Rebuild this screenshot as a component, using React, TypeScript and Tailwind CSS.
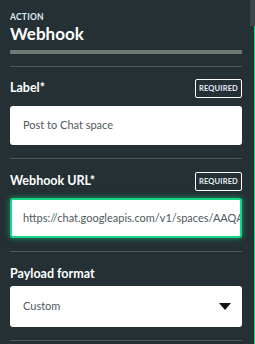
import React from 'react';

function Required() {
  return (
    <span className="flex items-center justify-center h-[19px] w-[47px] rounded-[2px] border border-white text-[7.5px] font-bold tracking-[0.02em] text-[#e6eef5]">
      REQUIRED
    </span>
  );
}

function Divider() {
  return <div className="h-px bg-[#4b5a59]" />;
}

export default function App() {
  return (
    <div className="flex h-[344px] w-[255px] overflow-hidden bg-[#243033]" style={{ fontFamily: 'Lato, "Noto Sans", sans-serif' }}>
      <div className="flex w-[250px] flex-col pl-[10px] pr-[8px]">
        {/* header */}
        <div className="pt-[12px] text-[8.5px] font-bold leading-[10px] tracking-[0.03em] text-[#dfe9f2]">ACTION</div>
        <div className="mt-[2px] text-[17px] font-bold leading-[19px] text-white">Webhook</div>
        <div className="mt-[7px] h-[4px] rounded-[1px] bg-[#6e7978]" />
        <div className="mt-[12px]">
          <Divider />
        </div>

        {/* label */}
        <div className="flex items-center justify-between pt-[12px]">
          <span className="text-[12.5px] font-bold text-white">Label*</span>
          <Required />
        </div>
        <div className="mt-[8px] flex h-[39px] items-center rounded-[3px] bg-white px-[13px] text-[11px] text-[#4f585c]">
          Post to Chat space
        </div>
        <div className="mt-[13px]">
          <Divider />
        </div>

        {/* webhook url */}
        <div className="flex items-center justify-between pt-[13px]">
          <span className="text-[12.5px] font-bold text-white">Webhook URL*</span>
          <Required />
        </div>
        <div className="mt-[7px] flex h-[40px] items-center overflow-hidden whitespace-nowrap rounded-[3px] border-2 border-[#12d98a] bg-white px-[11px] text-[11px] text-[#4f585c] shadow-[0_0_5px_1px_rgba(18,217,138,0.45)]">
          https://chat.googleapis.com/v1/spaces/AAQA
        </div>
        <div className="mt-[13px]">
          <Divider />
        </div>

        {/* payload */}
        <div className="pt-[13px] text-[12.5px] font-bold leading-[17px] text-white">Payload format</div>
        <div className="mt-[4px] flex h-[41px] items-center justify-between rounded-[3px] bg-white pl-[13px] pr-[11px] text-[11px] text-[#4f585c]">
          <span>Custom</span>
          <svg width="12" height="7" viewBox="0 0 12 7"><path d="M0 0h12L6 7z" fill="#111" /></svg>
        </div>
        <div className="mt-[13px]">
          <Divider />
        </div>
      </div>
      <div className="flex w-[5px] flex-col">
        <div className="h-[26px] bg-[#3b4648]" />
        <div className="flex flex-1">
          <div className="w-[4px] bg-[#243033]" />
          <div className="w-px bg-[#12d98a]" />
        </div>
      </div>
    </div>
  );
}
